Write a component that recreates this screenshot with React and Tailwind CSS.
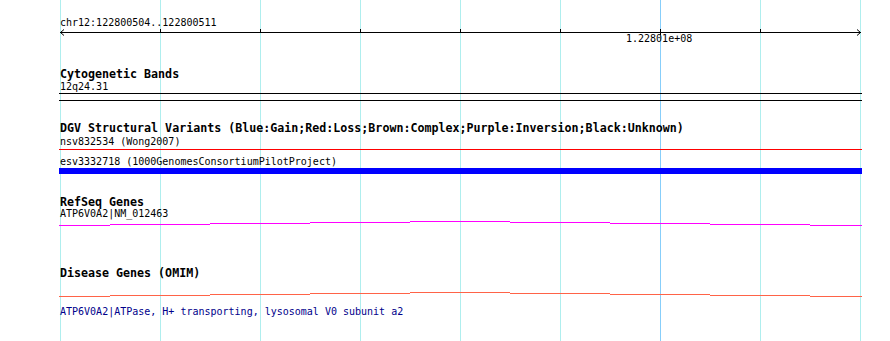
const GRID = [60, 160, 260, 360, 460, 560, 660, 760, 860]
const TICKS = [160, 260, 360, 460, 560, 760]
const ARCH = [
  [59, 110, 4],
  [110, 210, 3],
  [210, 310, 2],
  [310, 410, 1],
  [410, 510, 0],
  [510, 610, 1],
  [610, 710, 2],
  [710, 810, 3],
  [810, 862, 4],
]

function Arch({ color }) {
  return (
    <svg width="803" height="5" className="block" shapeRendering="crispEdges">
      {ARCH.map(([a, b, y]) => (
        <rect key={a} x={a - 59} y={y} width={b - a} height="1" fill={color} />
      ))}
    </svg>
  )
}

function Ruler() {
  return (
    <svg width="803" height="5" className="block overflow-visible" shapeRendering="crispEdges">
      <rect x="1" y="4" width="801" height="1" fill="#000" />
      {TICKS.map((x) => (
        <rect key={x} x={x - 59} y="1" width="1" height="3" fill="#000" />
      ))}
      <rect x={660 - 59} y="1" width="1" height="6" fill="#000" />
      <polyline points="5,1.5 1.5,4.5 5,7.5" fill="none" stroke="#000" strokeWidth="1" shapeRendering="auto" />
      <polyline points="798,1.5 801.5,4.5 798,7.5" fill="none" stroke="#000" strokeWidth="1" shapeRendering="auto" />
    </svg>
  )
}

const text = "h-[11px] text-[10px] leading-[11px] whitespace-pre"
const small = `${text} pl-px`
const title = 'h-[12px] pl-px text-[11.65px] leading-[12px] font-bold whitespace-pre'

export default function App() {
  return (
    <div className="relative h-[341px] w-[890px] overflow-hidden bg-white font-['DejaVu_Sans_Mono',monospace] text-black">
      <svg width="890" height="341" className="absolute inset-0" shapeRendering="crispEdges">
        {GRID.map((x) => (
          <rect key={x} x={x} y="0" width="1" height="341" fill={x === 660 ? '#87cefa' : '#afeeee'} />
        ))}
      </svg>

      <div className="relative ml-[59px] flex w-[803px] flex-col pt-[17px]">
        <div className={small}>chr12:122800504..122800511</div>
        <Ruler />
        <div className={`${text} pl-[567px]`}>1.22801e+08</div>

        <div className={`${title} mt-[24px]`}>Cytogenetic Bands</div>
        <div className={`${small} mt-px`}>12q24.31</div>
        <div className="mt-px h-[8px] border-y border-black" />

        <div className={`${title} mt-[21px]`}>
          DGV Structural Variants (Blue:Gain;Red:Loss;Brown:Complex;Purple:Inversion;Black:Unknown)
        </div>
        <div className={`${small} mt-[2px]`}>nsv832534 (Wong2007)</div>
        <div className="mt-[2px] h-px bg-[#ff0000]" />
        <div className={`${small} mt-[6px]`}>esv3332718 (1000GenomesConsortiumPilotProject)</div>
        <div className="mt-px h-[6px] bg-[#0000ff]" />

        <div className={`${title} mt-[22px]`}>RefSeq Genes</div>
        <div className={small}>ATP6V0A2|NM_012463</div>
        <div className="mt-[2px]">
          <Arch color="#ff00ff" />
        </div>

        <div className={`${title} mt-[41px]`}>Disease Genes (OMIM)</div>
        <div className="mt-[13px]">
          <Arch color="#ff6347" />
        </div>
        <div className={`${small} mt-[9px] text-[#00008b]`}>
          ATP6V0A2|ATPase, H+ transporting, lysosomal V0 subunit a2
        </div>
      </div>
    </div>
  )
}
